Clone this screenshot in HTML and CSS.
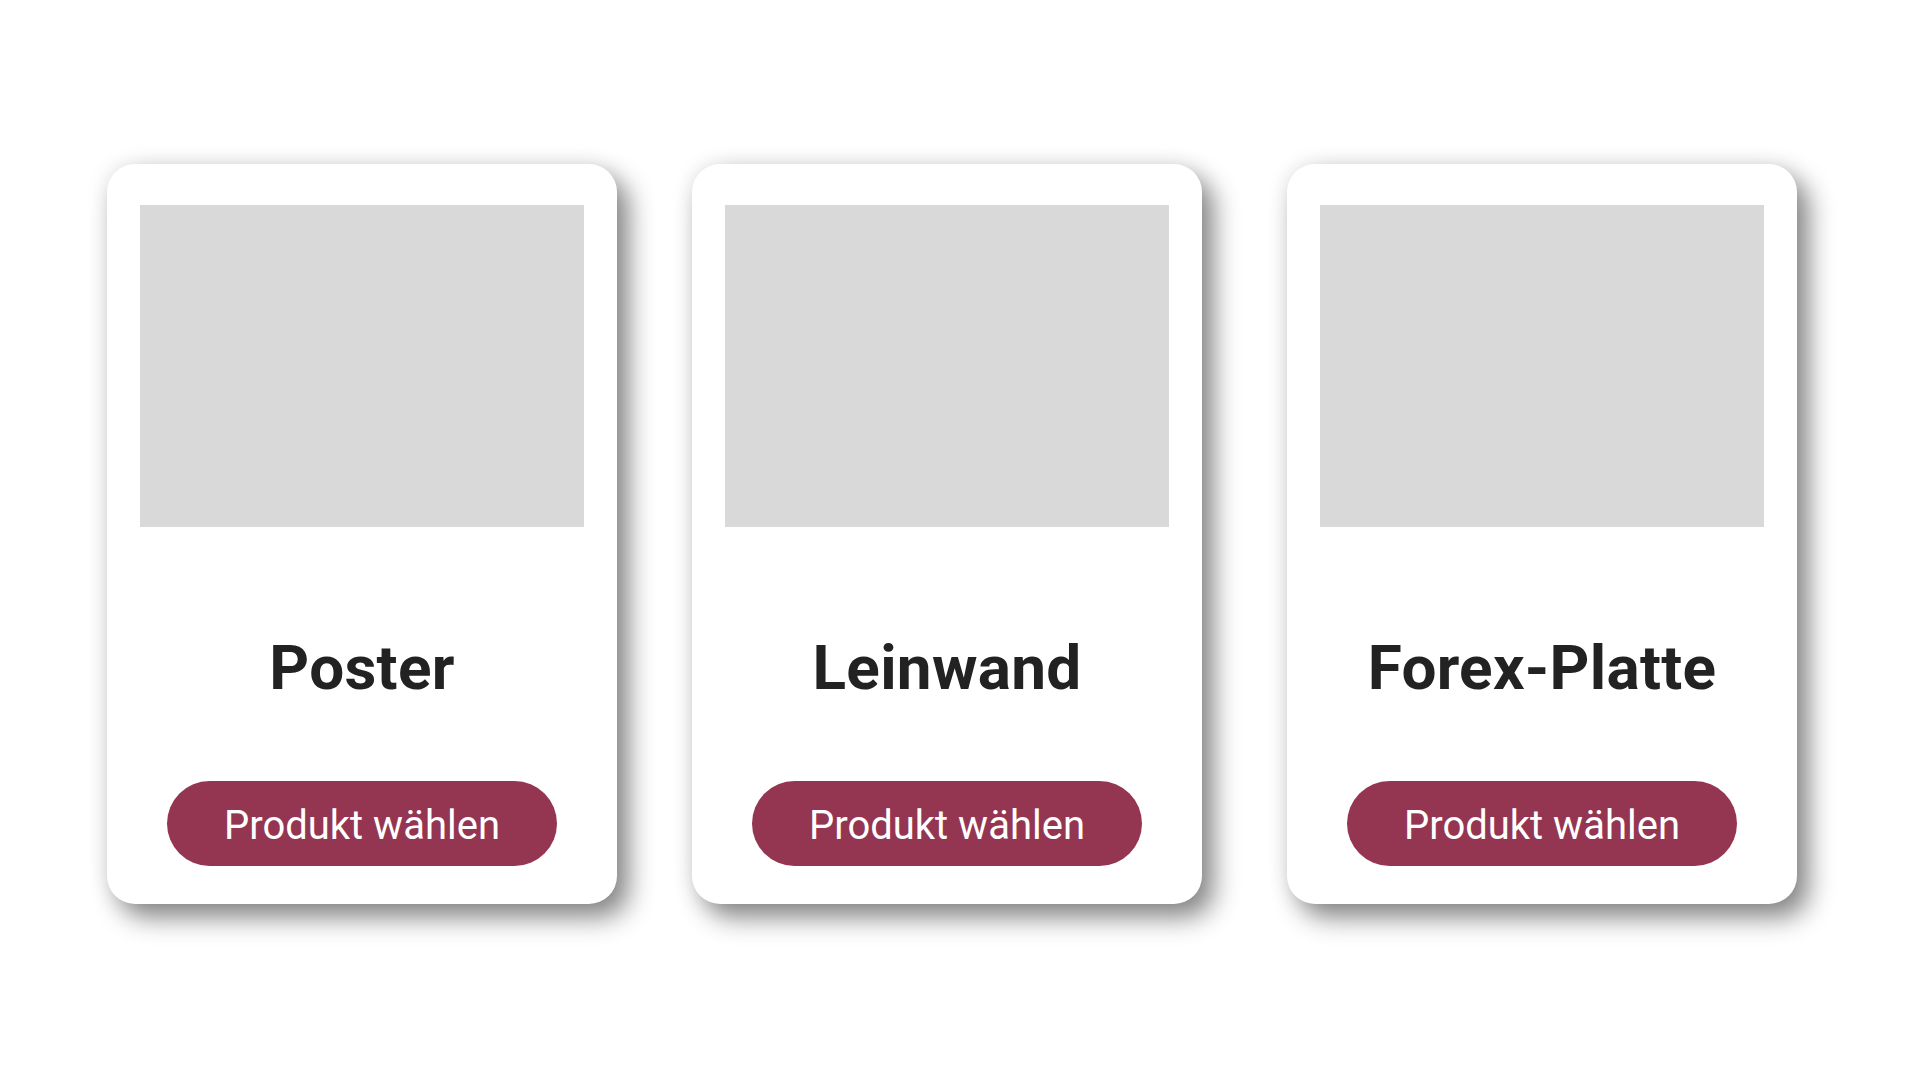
FILE: index.html
```html
<!DOCTYPE html>
<html lang="de">
<head>
<meta charset="utf-8">
<title>Produkte</title>
<link rel="stylesheet" href="styles.css">
</head>
<body>
<main class="products">
  <article class="card">
    <div class="card-image"></div>
    <h2 class="card-title">Poster</h2>
    <button class="card-button">Produkt wählen</button>
  </article>
  <article class="card">
    <div class="card-image"></div>
    <h2 class="card-title">Leinwand</h2>
    <button class="card-button">Produkt wählen</button>
  </article>
  <article class="card card-last">
    <div class="card-image"></div>
    <h2 class="card-title">Forex-Platte</h2>
    <button class="card-button">Produkt wählen</button>
  </article>
</main>
</body>
</html>
```
FILE: styles.css
```css
html, body {
  margin: 0;
  padding: 0;
  background: #ffffff;
  font-family: Roboto, "Liberation Sans", Arial, sans-serif;
}

body {
  min-height: 1080px;
}

.products {
  display: flex;
  align-items: flex-start;
  gap: 75px;
  padding: 164px 0 120px 107px;
}

.card {
  box-sizing: border-box;
  width: 510px;
  height: 740px;
  padding: 41px 33px 38px;
  background: #ffffff;
  border-radius: 28px;
  display: flex;
  flex-direction: column;
  align-items: center;
  box-shadow: 12px 14px 26px rgba(0, 0, 0, 0.45), 0 0 22px rgba(0, 0, 0, 0.1);
}

.card-last {
  margin-left: 10px;
}

.card-image {
  width: 100%;
  height: 322px;
  background: #d9d9d9;
  flex: none;
}

.card-title {
  flex: 1;
  display: flex;
  align-items: center;
  justify-content: center;
  margin: 0;
  padding-top: 26px;
  font-size: 62px;
  font-weight: 700;
  color: #222222;
  letter-spacing: 0.3px;
}

.card-button {
  width: 390px;
  height: 85px;
  border: none;
  border-radius: 43px;
  background: #943651;
  color: #ffffff;
  font-family: Roboto, "Liberation Sans", Arial, sans-serif;
  font-size: 40px;
  font-weight: 400;
  flex: none;
  padding: 3px 0 0;
  cursor: pointer;
}
```
